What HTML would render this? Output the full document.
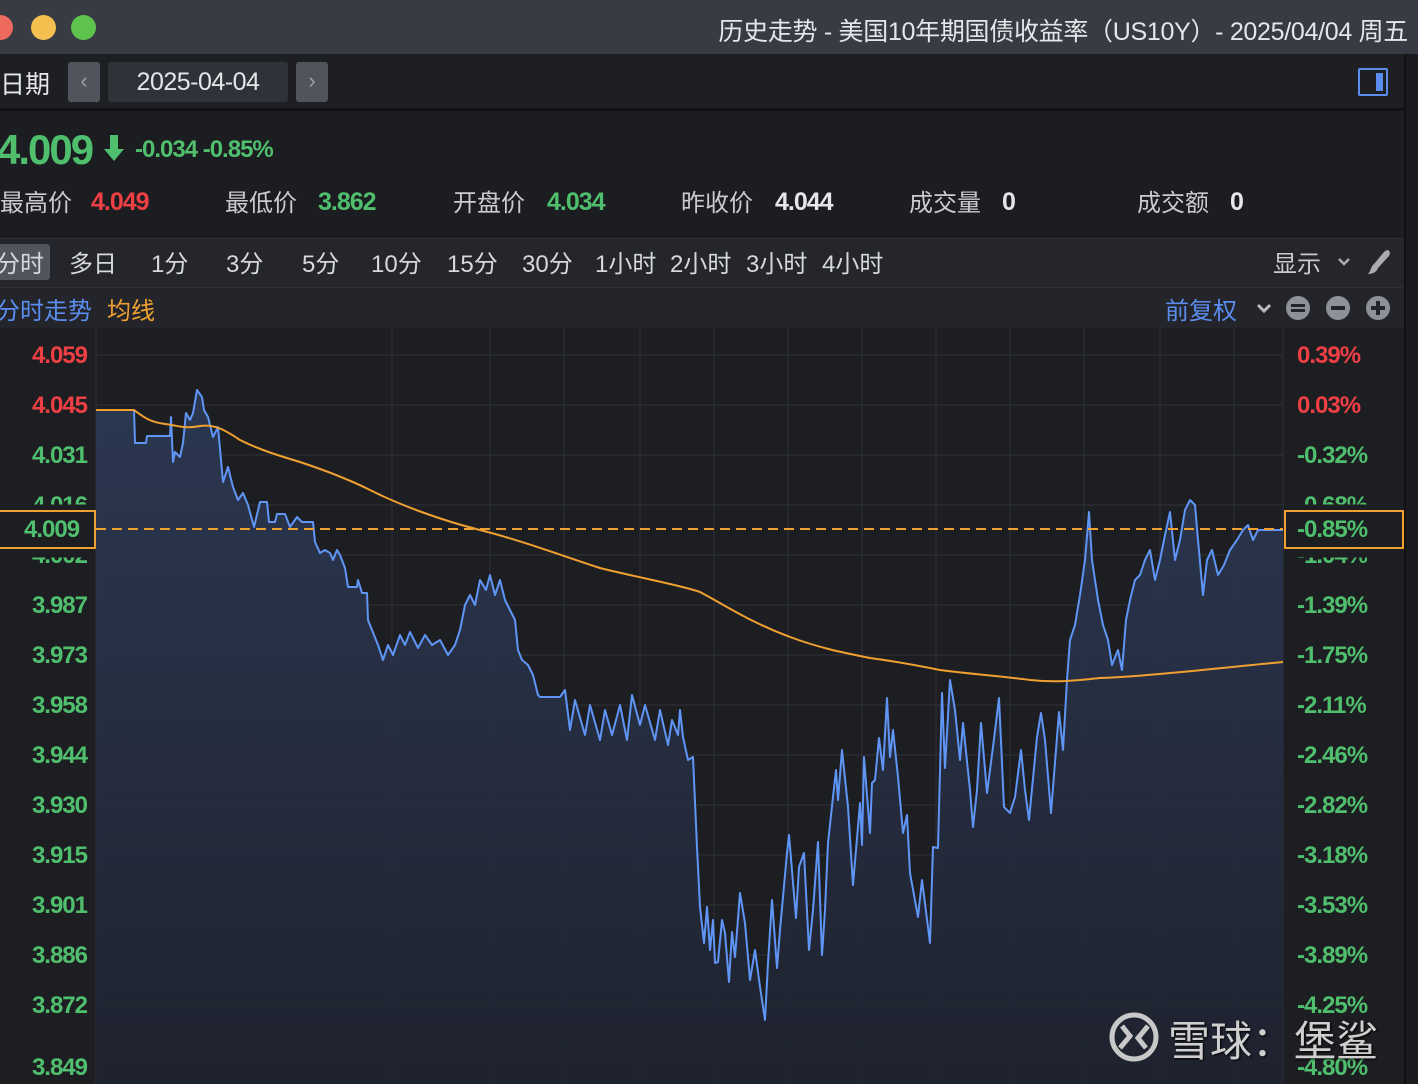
<!DOCTYPE html>
<html><head><meta charset="utf-8"><style>
*{margin:0;padding:0;box-sizing:border-box}
body{width:1418px;height:1084px;overflow:hidden;background:#1c1d21;font-family:"Liberation Sans","Noto Sans CJK SC",sans-serif;position:relative;color:#c9cbd0}
.a{position:absolute;white-space:nowrap}
.g{color:#4fbf6e}.r{color:#ee3f45}.w{color:#e4e6ea}
.n{letter-spacing:-1px;font-weight:bold}
</style></head><body>
<div class="a" style="left:0;top:0;width:1418px;height:54px;background:#383b43"></div>
<div class="a" style="left:-12px;top:15px;width:25px;height:25px;border-radius:50%;background:#ee6a5e"></div>
<div class="a" style="left:31px;top:15px;width:25px;height:25px;border-radius:50%;background:#f4bf4f"></div>
<div class="a" style="left:71px;top:15px;width:25px;height:25px;border-radius:50%;background:#5ec34c"></div>
<div class="a w" style="right:10px;top:12px;font-size:25px;letter-spacing:-0.3px">历史走势 - 美国10年期国债收益率（US10Y）- 2025/04/04 周五</div>
<div class="a" style="left:0;top:54px;width:1404px;height:54px;background:#1e1f23"></div>
<div class="a" style="left:0;top:108px;width:1418px;height:3px;background:#111214"></div>
<div class="a" style="left:1404px;top:54px;width:14px;height:1030px;background:#1a1b1e;border-left:2px solid #111"></div>
<div class="a w" style="left:0;top:65px;font-size:25px;font-family:'Noto Sans CJK SC',sans-serif">日期</div>
<div class="a" style="left:68px;top:62px;width:32px;height:40px;background:#50545c;border-radius:3px;color:#9a9ea6;font-size:22px;text-align:center;line-height:38px">‹</div>
<div class="a w" style="left:108px;top:62px;width:180px;height:40px;background:#2f3238;border-radius:3px;font-size:25px;text-align:center;line-height:40px;letter-spacing:-0.5px">2025-04-04</div>
<div class="a" style="left:296px;top:62px;width:32px;height:40px;background:#50545c;border-radius:3px;color:#9a9ea6;font-size:22px;text-align:center;line-height:38px">›</div>
<div class="a" style="left:1358px;top:68px;width:30px;height:28px;border:2px solid #5b8def;border-radius:2px"><div style="position:absolute;right:3px;top:3px;width:7px;height:18px;background:#5b8def"></div></div>

<div class="a g n" style="left:-3px;top:126px;font-size:42px;letter-spacing:-2px">4.009</div>
<svg class="a" style="left:102px;top:133px" width="24" height="30"><path d="M8 2h8v14h6L12 28 2 16h6z" fill="#4fbf6e"/></svg>
<div class="a g n" style="left:135px;top:136px;font-size:24px">-0.034 -0.85%</div>

<div class="a" style="left:0;top:183px;font-size:24px;font-family:'Noto Sans CJK SC',sans-serif">最高价</div><div class="a r n" style="left:91px;top:188px;font-size:25px">4.049</div>
<div class="a" style="left:225px;top:183px;font-size:24px;font-family:'Noto Sans CJK SC',sans-serif">最低价</div><div class="a g n" style="left:318px;top:188px;font-size:25px">3.862</div>
<div class="a" style="left:453px;top:183px;font-size:24px;font-family:'Noto Sans CJK SC',sans-serif">开盘价</div><div class="a g n" style="left:547px;top:188px;font-size:25px">4.034</div>
<div class="a" style="left:681px;top:183px;font-size:24px;font-family:'Noto Sans CJK SC',sans-serif">昨收价</div><div class="a w n" style="left:775px;top:188px;font-size:25px">4.044</div>
<div class="a" style="left:909px;top:183px;font-size:24px;font-family:'Noto Sans CJK SC',sans-serif">成交量</div><div class="a w n" style="left:1002px;top:188px;font-size:25px">0</div>
<div class="a" style="left:1137px;top:183px;font-size:24px;font-family:'Noto Sans CJK SC',sans-serif">成交额</div><div class="a w n" style="left:1230px;top:188px;font-size:25px">0</div>

<div class="a" style="left:0;top:238px;width:1404px;height:50px;background:#24262b;border-top:1px solid #2e3036;border-bottom:1px solid #2e3036"></div>
<div class="a" style="left:0;top:244px;width:50px;height:36px;background:#50545c;border-radius:0 3px 3px 0"></div>
<div class="a" style="left:0;top:244px;font-size:24px;color:#d6d8dc;font-family:'Liberation Sans','Noto Sans CJK SC',sans-serif">
<span style="position:absolute;left:-4px">分时</span><span style="position:absolute;left:69px">多日</span><span style="position:absolute;left:151px">1分</span><span style="position:absolute;left:226px">3分</span><span style="position:absolute;left:302px">5分</span><span style="position:absolute;left:371px">10分</span><span style="position:absolute;left:447px">15分</span><span style="position:absolute;left:522px">30分</span><span style="position:absolute;left:595px">1小时</span><span style="position:absolute;left:670px">2小时</span><span style="position:absolute;left:746px">3小时</span><span style="position:absolute;left:822px">4小时</span></div>
<div class="a" style="left:1273px;top:244px;font-size:24px;font-family:'Noto Sans CJK SC',sans-serif">显示</div>
<svg class="a" style="left:1336px;top:256px" width="16" height="12"><path d="M3 3l5 5 5-5" stroke="#aaa" stroke-width="2.5" fill="none"/></svg>
<svg class="a" style="left:1366px;top:248px" width="26" height="28"><path d="M22 2c3 2 2 5 0 7L12 20c-1 3-4 6-10 6 3-3 3-8 6-10L18 4c1-1 3-2 4-2z" fill="#a9abb0"/></svg>

<div class="a" style="left:0;top:288px;width:1404px;height:40px;background:#23252a"></div>
<div class="a" style="left:-4px;top:291px;font-size:24px;color:#5b8def;font-family:'Noto Sans CJK SC',sans-serif">分时走势</div>
<div class="a" style="left:107px;top:291px;font-size:24px;color:#f0a030;font-family:'Noto Sans CJK SC',sans-serif">均线</div>
<div class="a" style="left:1165px;top:291px;font-size:24px;color:#5b8def;font-family:'Noto Sans CJK SC',sans-serif">前复权</div>
<svg class="a" style="left:1255px;top:302px" width="18" height="14"><path d="M3 3l6 6 6-6" stroke="#bbb" stroke-width="3" fill="none"/></svg>
<svg class="a" style="left:1286px;top:296px" width="104" height="26">
<circle cx="12" cy="12" r="12" fill="#8e9197"/><rect x="5" y="8" width="14" height="3" fill="#23252a"/><rect x="5" y="13" width="14" height="3" fill="#23252a"/>
<circle cx="52" cy="12" r="12" fill="#8e9197"/><rect x="45" y="10" width="14" height="4" fill="#23252a"/>
<circle cx="92" cy="12" r="12" fill="#8e9197"/><rect x="85" y="10" width="14" height="4" fill="#23252a"/><rect x="90" y="5" width="4" height="14" fill="#23252a"/></svg>

<svg class="a" style="left:0;top:0" width="1418" height="1084">
<defs><linearGradient id="f" x1="0" y1="380" x2="0" y2="1084" gradientUnits="userSpaceOnUse"><stop offset="0" stop-color="#2d3a56"/><stop offset="1" stop-color="#1f2330"/></linearGradient>
<path id="p" d="M96 410L134 410 135 443 146 443 147 436 170 436 171 417 173 462 175 452 180 457 183 443 186 413 190 420 193 413 197 390 202 397 204 410 208 417 213 437 218 427 223 482 228 467 233 487 238 500 243 493 248 505 254 527 260 502 267 502 269 522 275 522 277 514 285 514 290 527 297 517 302 522 313 522 315 542 320 553 325 550 330 553 333 560 337 550 340 555 345 568 348 587 357 587 358 580 362 593 367 593 368 620 372 630 378 645 383 660 388 645 393 655 400 635 405 645 410 632 418 648 425 635 432 645 440 640 448 655 455 645 460 630 465 605 470 595 475 605 480 580 486 590 490 575 495 595 500 580 505 600 510 610 515 620 518 650 522 660 528 665 533 675 538 695 540 697 560 697 565 690 570 730 575 700 585 735 590 705 600 740 605 710 612 735 620 705 627 740 632 695 640 725 645 705 655 740 660 710 668 745 672 720 678 735 680 710 683 737 688 760 693 757 697 847 700 907 704 943 707 907 710 950 713 920 715 963 718 962 722 920 725 933 729 982 732 932 735 957 740 893 745 923 750 980 755 950 760 987 765 1020 768 963 772 900 777 968 780 930 787 853 789 835 796 918 799 867 804 853 809 950 813 910 818 842 822 955 825 910 828 843 833 797 836 770 838 800 842 750 848 807 853 885 860 803 862 845 864 757 870 833 872 783 875 780 879 738 883 770 887 698 890 757 893 730 898 777 903 833 907 815 910 873 918 917 922 880 930 943 933 847 938 848 942 693 945 768 950 680 955 710 960 760 963 723 970 790 973 827 977 790 981 723 987 793 993 747 999 698 1004 807 1010 813 1015 797 1021 750 1025 790 1029 820 1037 737 1041 713 1045 740 1051 813 1059 712 1063 750 1067 680 1070 640 1075 625 1080 595 1085 560 1089 512 1092 560 1098 600 1103 625 1108 640 1112 665 1118 650 1122 670 1126 620 1130 600 1135 580 1140 575 1145 560 1150 550 1155 580 1160 560 1165 535 1170 512 1175 560 1180 540 1185 510 1190 500 1195 505 1198 540 1203 595 1207 560 1212 550 1218 575 1224 565 1230 550 1237 540 1243 530 1248 525 1253 540 1258 530 1283 530"/>
</defs>
<rect x="0" y="328" width="1404" height="756" fill="#1d1e22"/>
<g stroke="#2a2c33" stroke-width="1.5">
<line x1="96" y1="355" x2="1283" y2="355"/><line x1="96" y1="405" x2="1283" y2="405"/><line x1="96" y1="455" x2="1283" y2="455"/><line x1="96" y1="505" x2="1283" y2="505"/><line x1="96" y1="555" x2="1283" y2="555"/><line x1="96" y1="605" x2="1283" y2="605"/><line x1="96" y1="655" x2="1283" y2="655"/><line x1="96" y1="705" x2="1283" y2="705"/><line x1="96" y1="755" x2="1283" y2="755"/><line x1="96" y1="805" x2="1283" y2="805"/><line x1="96" y1="855" x2="1283" y2="855"/><line x1="96" y1="905" x2="1283" y2="905"/><line x1="96" y1="955" x2="1283" y2="955"/><line x1="96" y1="1005" x2="1283" y2="1005"/><line x1="96" y1="1055" x2="1283" y2="1055"/>
<line x1="96" y1="328" x2="96" y2="1084"/><line x1="392" y1="328" x2="392" y2="1084"/><line x1="490" y1="328" x2="490" y2="1084"/><line x1="564" y1="328" x2="564" y2="1084"/><line x1="640" y1="328" x2="640" y2="1084"/><line x1="714" y1="328" x2="714" y2="1084"/><line x1="788" y1="328" x2="788" y2="1084"/><line x1="862" y1="328" x2="862" y2="1084"/><line x1="936" y1="328" x2="936" y2="1084"/><line x1="1010" y1="328" x2="1010" y2="1084"/><line x1="1084" y1="328" x2="1084" y2="1084"/><line x1="1160" y1="328" x2="1160" y2="1084"/><line x1="1234" y1="328" x2="1234" y2="1084"/><line x1="1283" y1="328" x2="1283" y2="1084"/>
</g>
<path d="M96 410L134 410 135 443 146 443 147 436 170 436 171 417 173 462 175 452 180 457 183 443 186 413 190 420 193 413 197 390 202 397 204 410 208 417 213 437 218 427 223 482 228 467 233 487 238 500 243 493 248 505 254 527 260 502 267 502 269 522 275 522 277 514 285 514 290 527 297 517 302 522 313 522 315 542 320 553 325 550 330 553 333 560 337 550 340 555 345 568 348 587 357 587 358 580 362 593 367 593 368 620 372 630 378 645 383 660 388 645 393 655 400 635 405 645 410 632 418 648 425 635 432 645 440 640 448 655 455 645 460 630 465 605 470 595 475 605 480 580 486 590 490 575 495 595 500 580 505 600 510 610 515 620 518 650 522 660 528 665 533 675 538 695 540 697 560 697 565 690 570 730 575 700 585 735 590 705 600 740 605 710 612 735 620 705 627 740 632 695 640 725 645 705 655 740 660 710 668 745 672 720 678 735 680 710 683 737 688 760 693 757 697 847 700 907 704 943 707 907 710 950 713 920 715 963 718 962 722 920 725 933 729 982 732 932 735 957 740 893 745 923 750 980 755 950 760 987 765 1020 768 963 772 900 777 968 780 930 787 853 789 835 796 918 799 867 804 853 809 950 813 910 818 842 822 955 825 910 828 843 833 797 836 770 838 800 842 750 848 807 853 885 860 803 862 845 864 757 870 833 872 783 875 780 879 738 883 770 887 698 890 757 893 730 898 777 903 833 907 815 910 873 918 917 922 880 930 943 933 847 938 848 942 693 945 768 950 680 955 710 960 760 963 723 970 790 973 827 977 790 981 723 987 793 993 747 999 698 1004 807 1010 813 1015 797 1021 750 1025 790 1029 820 1037 737 1041 713 1045 740 1051 813 1059 712 1063 750 1067 680 1070 640 1075 625 1080 595 1085 560 1089 512 1092 560 1098 600 1103 625 1108 640 1112 665 1118 650 1122 670 1126 620 1130 600 1135 580 1140 575 1145 560 1150 550 1155 580 1160 560 1165 535 1170 512 1175 560 1180 540 1185 510 1190 500 1195 505 1198 540 1203 595 1207 560 1212 550 1218 575 1224 565 1230 550 1237 540 1243 530 1248 525 1253 540 1258 530 1283 530 1283 1084 96 1084Z" fill="url(#f)" opacity="0.9"/>
<use href="#p" fill="none" stroke="#5f95f5" stroke-width="2" stroke-linejoin="round"/>
<path d="M96 410L134 410C145 418 150 422 165 424C180 426 185 429 200 426C215 424 225 430 240 440C260 450 280 456 300 462C330 472 350 480 370 490C400 505 440 520 480 530C520 540 560 555 600 568C640 578 680 585 700 592C730 608 750 622 790 637C820 648 840 652 870 658C900 662 920 666 940 670C970 674 1000 676 1030 680C1060 683 1080 680 1100 678C1150 676 1200 670 1283 662" fill="none" stroke="#f0a030" stroke-width="2"/>
<line x1="96" y1="529" x2="1283" y2="529" stroke="#f0a030" stroke-width="2" stroke-dasharray="10 6"/>
<rect x="-2" y="511" width="97" height="37" fill="#1d1e22" stroke="#f0a030" stroke-width="2"/>
<rect x="1285" y="511" width="118" height="37" fill="#1d1e22" stroke="#f0a030" stroke-width="2"/>
</svg>

<div class="a n" style="left:0;top:341px;width:87px;text-align:right;font-size:24px;line-height:30px">
<div class="r" style="position:absolute;right:0;top:0">4.059</div>
<div class="r" style="position:absolute;right:0;top:50px">4.045</div>
<div class="g" style="position:absolute;right:0;top:100px">4.031</div>
<div class="g" style="position:absolute;right:0;top:150px;clip-path:inset(0 0 55% 0)">4.016</div>
<div class="g" style="position:absolute;right:0;top:200px;clip-path:inset(55% 0 0 0)">4.002</div>
<div class="g" style="position:absolute;right:0;top:250px">3.987</div>
<div class="g" style="position:absolute;right:0;top:300px">3.973</div>
<div class="g" style="position:absolute;right:0;top:350px">3.958</div>
<div class="g" style="position:absolute;right:0;top:400px">3.944</div>
<div class="g" style="position:absolute;right:0;top:450px">3.930</div>
<div class="g" style="position:absolute;right:0;top:500px">3.915</div>
<div class="g" style="position:absolute;right:0;top:550px">3.901</div>
<div class="g" style="position:absolute;right:0;top:600px">3.886</div>
<div class="g" style="position:absolute;right:0;top:650px">3.872</div>
<div class="g" style="position:absolute;right:0;top:712px">3.849</div>
</div>
<div class="a g n" style="left:24px;top:516px;font-size:24px">4.009</div>
<div class="a n" style="left:1297px;top:341px;font-size:24px;line-height:30px">
<div class="r" style="position:absolute;left:0;top:0">0.39%</div>
<div class="r" style="position:absolute;left:0;top:50px">0.03%</div>
<div class="g" style="position:absolute;left:0;top:100px">-0.32%</div>
<div class="g" style="position:absolute;left:0;top:150px;clip-path:inset(0 0 55% 0)">-0.68%</div>
<div class="g" style="position:absolute;left:0;top:200px;clip-path:inset(55% 0 0 0)">-1.04%</div>
<div class="g" style="position:absolute;left:0;top:250px">-1.39%</div>
<div class="g" style="position:absolute;left:0;top:300px">-1.75%</div>
<div class="g" style="position:absolute;left:0;top:350px">-2.11%</div>
<div class="g" style="position:absolute;left:0;top:400px">-2.46%</div>
<div class="g" style="position:absolute;left:0;top:450px">-2.82%</div>
<div class="g" style="position:absolute;left:0;top:500px">-3.18%</div>
<div class="g" style="position:absolute;left:0;top:550px">-3.53%</div>
<div class="g" style="position:absolute;left:0;top:600px">-3.89%</div>
<div class="g" style="position:absolute;left:0;top:650px">-4.25%</div>
<div class="g" style="position:absolute;left:0;top:712px">-4.80%</div>
</div>
<div class="a g n" style="left:1297px;top:516px;font-size:24px">-0.85%</div>

<svg class="a" style="left:1108px;top:1010px" width="54" height="54"><circle cx="26" cy="27" r="22" fill="none" stroke="#c8c8c8" stroke-width="5"/><path d="M12 38L22 26 14 16M40 16L30 28 38 38" stroke="#c8c8c8" stroke-width="5" fill="none"/></svg>
<div class="a" style="left:1168px;top:1008px;font-size:42px;color:#cfcfcf;font-family:'Noto Sans CJK SC',sans-serif;text-shadow:1px 1px 2px #000">雪球：堡鲨</div>
</body></html>
